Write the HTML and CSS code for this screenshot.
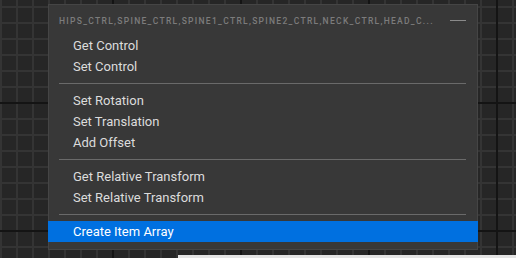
FILE: index.html
```html
<!DOCTYPE html>
<html lang="en">
<head>
  <meta charset="UTF-8">
  <title>Context Menu</title>
  <link rel="stylesheet" href="styles.css">
</head>
<body>

  <div class="graph">
    <div class="menu">
      <div class="menu-header">
        <span class="menu-title">HIPS_CTRL,SPINE_CTRL,SPINE1_CTRL,SPINE2_CTRL,NECK_CTRL,HEAD_C...</span>
        <span class="collapse"></span>
      </div>

      <div class="item">Get Control</div>
      <div class="item">Set Control</div>
      <div class="sep"></div>

      <div class="item">Set Rotation</div>
      <div class="item">Set Translation</div>
      <div class="item">Add Offset</div>
      <div class="sep"></div>

      <div class="item">Get Relative Transform</div>
      <div class="item">Set Relative Transform</div>
      <div class="sep"></div>

      <div class="item active">Create Item Array</div>
    </div>

    <!-- strip of the panel below the graph -->
    <div class="bottom-strip"></div>
  </div>

</body>
</html>
```

FILE: styles.css
```css
* {
  box-sizing: border-box;
  margin: 0;
  padding: 0;
}

body {
  width: 516px;
  height: 258px;
  overflow: hidden;
  font-family: Roboto, "Noto Sans", sans-serif;
}

.graph {
  position: relative;
  width: 516px;
  height: 258px;
  padding: 4px 0 0 48px;
  background-color: #262626;
  background-image:
    linear-gradient(to right, #141414 2px, transparent 2px),
    linear-gradient(to bottom, #141414 2px, transparent 2px),
    linear-gradient(to right, #343434 2px, transparent 2px),
    linear-gradient(to bottom, #343434 2px, transparent 2px);
  background-size: 128px 128px, 128px 128px, 16px 16px, 16px 16px;
  background-position: 112px 0, 0 102px, 0 0, 0 6px;
}

.menu {
  width: 430px;
  height: 246px;
  background-color: #383838;
  border: 1px solid #454545;
  padding-bottom: 7px;
}

.menu-header {
  height: 30px;
  display: flex;
  align-items: center;
  padding: 0 11px 0 10px;
}

.menu-title {
  flex: 1;
  font-size: 8.5px;
  font-weight: 500;
  letter-spacing: 1.3px;
  color: #7c7c7c;
  white-space: nowrap;
  overflow: hidden;
  padding-top: 1px;
}

.collapse {
  width: 16px;
  height: 1px;
  background-color: #8a8a8a;
  margin-left: 12px;
  margin-top: 1px;
}

.item {
  height: 21px;
  line-height: 21px;
  padding-left: 24px;
  font-size: 13px;
  color: #dcdcdc;
}

.item.active {
  background-color: #0070e0;
  color: #ffffff;
  margin: 0 -1px;
  padding-left: 25px;
}

.sep {
  height: 1px;
  margin: 6px 11px 6px 10px;
  background-color: #6a6a6a;
}

.bottom-strip {
  position: absolute;
  left: 178px;
  right: 0;
  bottom: 0;
  height: 3px;
  background-color: #e4e4e4;
}
```
